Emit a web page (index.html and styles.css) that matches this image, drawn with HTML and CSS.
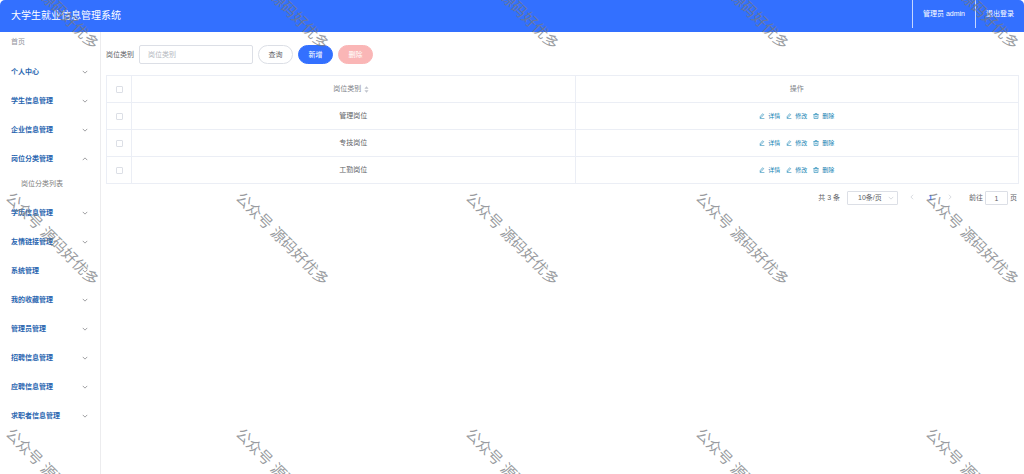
FILE: index.html
```html
<!DOCTYPE html>
<html lang="zh-CN">
<head>
  <meta charset="UTF-8">
  <meta name="viewport" content="width=device-width, initial-scale=1.0">
  <title>大学生就业信息管理系统</title>
  <link rel="stylesheet" href="styles.css">
</head>
<body>

<!-- 图标 -->
<svg class="icon-defs" aria-hidden="true">
  <symbol id="icon-down" viewBox="0 0 8 8"><path d="M1 2.5 4 5.5 7 2.5"/></symbol>
  <symbol id="icon-up" viewBox="0 0 8 8"><path d="M1 5.5 4 2.5 7 5.5"/></symbol>
  <symbol id="icon-left" viewBox="0 0 8 8"><path d="M5.5 1 2.5 4 5.5 7"/></symbol>
  <symbol id="icon-right" viewBox="0 0 8 8"><path d="M2.5 1 5.5 4 2.5 7"/></symbol>
  <symbol id="icon-edit" viewBox="0 0 8 8"><path d="M1.6 4.8 4.8 1 6.2 2.2 3 5.9 1.4 6.3ZM1 7.5H7.2"/></symbol>
  <symbol id="icon-delete" viewBox="0 0 8 8"><path d="M.5 2H7.5M1.4 2V7.4H6.6V2M2.8 2V.7H5.2V2M3.2 3.6V5.8M4.8 3.6V5.8"/></symbol>
</svg>

<header class="header">
  <h1 class="header-title">大学生就业信息管理系统</h1>
  <div class="header-right">
    <span class="header-item">管理员 admin</span>
    <a class="header-item" href="#">退出登录</a>
  </div>
</header>

<div class="container">
  <!-- 侧边菜单 -->
  <nav class="sidebar">
    <a class="menu-home" href="#">首页</a>
    <button class="menu-item" type="button">个人中心<svg class="icon"><use href="#icon-down"/></svg></button>
    <button class="menu-item" type="button">学生信息管理<svg class="icon"><use href="#icon-down"/></svg></button>
    <button class="menu-item" type="button">企业信息管理<svg class="icon"><use href="#icon-down"/></svg></button>
    <button class="menu-item" type="button" aria-expanded="true">岗位分类管理<svg class="icon"><use href="#icon-up"/></svg></button>
    <a class="menu-sub" href="#">岗位分类列表</a>
    <button class="menu-item" type="button">学历信息管理<svg class="icon"><use href="#icon-down"/></svg></button>
    <button class="menu-item" type="button">友情链接管理<svg class="icon"><use href="#icon-down"/></svg></button>
    <button class="menu-item" type="button">系统管理<svg class="icon"><use href="#icon-down"/></svg></button>
    <button class="menu-item" type="button">我的收藏管理<svg class="icon"><use href="#icon-down"/></svg></button>
    <button class="menu-item" type="button">管理员管理<svg class="icon"><use href="#icon-down"/></svg></button>
    <button class="menu-item" type="button">招聘信息管理<svg class="icon"><use href="#icon-down"/></svg></button>
    <button class="menu-item" type="button">应聘信息管理<svg class="icon"><use href="#icon-down"/></svg></button>
    <button class="menu-item" type="button">求职者信息管理<svg class="icon"><use href="#icon-down"/></svg></button>
  </nav>

  <main class="main">
    <!-- 查询条件 -->
    <form class="search-form">
      <label for="category">岗位类别</label>
      <input class="search-input" type="text" id="category" placeholder="岗位类别">
      <button class="btn" type="button">查询</button>
      <button class="btn btn-primary" type="button">新增</button>
      <button class="btn btn-danger" type="button" disabled>删除</button>
    </form>

    <!-- 岗位分类列表 -->
    <table class="table">
      <thead>
        <tr>
          <th class="col-check"><input class="checkbox" type="checkbox" aria-label="全选"></th>
          <th>岗位类别<svg class="sort" viewBox="0 0 6 8"><path d="M3 0 5.5 3H.5ZM3 8 .5 5H5.5Z"/></svg></th>
          <th>操作</th>
        </tr>
      </thead>
      <tbody>
        <tr>
          <td><input class="checkbox" type="checkbox" aria-label="管理岗位"></td>
          <td>管理岗位</td>
          <td>
            <div class="actions">
              <button class="action" type="button"><svg class="icon"><use href="#icon-edit"/></svg>详情</button>
              <button class="action" type="button"><svg class="icon"><use href="#icon-edit"/></svg>修改</button>
              <button class="action" type="button"><svg class="icon"><use href="#icon-delete"/></svg>删除</button>
            </div>
          </td>
        </tr>
        <tr>
          <td><input class="checkbox" type="checkbox" aria-label="专技岗位"></td>
          <td>专技岗位</td>
          <td>
            <div class="actions">
              <button class="action" type="button"><svg class="icon"><use href="#icon-edit"/></svg>详情</button>
              <button class="action" type="button"><svg class="icon"><use href="#icon-edit"/></svg>修改</button>
              <button class="action" type="button"><svg class="icon"><use href="#icon-delete"/></svg>删除</button>
            </div>
          </td>
        </tr>
        <tr>
          <td><input class="checkbox" type="checkbox" aria-label="工勤岗位"></td>
          <td>工勤岗位</td>
          <td>
            <div class="actions">
              <button class="action" type="button"><svg class="icon"><use href="#icon-edit"/></svg>详情</button>
              <button class="action" type="button"><svg class="icon"><use href="#icon-edit"/></svg>修改</button>
              <button class="action" type="button"><svg class="icon"><use href="#icon-delete"/></svg>删除</button>
            </div>
          </td>
        </tr>
      </tbody>
    </table>

    <!-- 分页 -->
    <div class="pagination">
      <span>共 3 条</span>
      <div class="page-size">
        <select aria-label="每页条数">
          <option>10条/页</option>
          <option>20条/页</option>
          <option>50条/页</option>
        </select>
        <svg class="icon"><use href="#icon-down"/></svg>
      </div>
      <div class="pager">
        <button type="button" aria-label="上一页" disabled><svg class="icon"><use href="#icon-left"/></svg></button>
        <button class="current" type="button">1</button>
        <button type="button" aria-label="下一页" disabled><svg class="icon"><use href="#icon-right"/></svg></button>
      </div>
      <div class="page-jump">
        <label for="page">前往</label>
        <input type="text" id="page" value="1">
        <span>页</span>
      </div>
    </div>
  </main>
</div>

<!-- 水印 -->
<div class="watermark">
  <div class="watermark-grid">
    <span>公众号 源码好优多</span><span>公众号 源码好优多</span><span>公众号 源码好优多</span><span>公众号 源码好优多</span><span>公众号 源码好优多</span>
    <span>公众号 源码好优多</span><span>公众号 源码好优多</span><span>公众号 源码好优多</span><span>公众号 源码好优多</span><span>公众号 源码好优多</span>
    <span>公众号 源码好优多</span><span>公众号 源码好优多</span><span>公众号 源码好优多</span><span>公众号 源码好优多</span><span>公众号 源码好优多</span>
  </div>
</div>

</body>
</html>
```
FILE: styles.css
```css
/* 基础样式 */
* {
  box-sizing: border-box;
}

body {
  margin: 0;
  min-height: 100vh;
  display: flex;
  flex-direction: column;
  background: #fff;
  color: #606266;
  font-family: "Liberation Sans", "Noto Sans CJK SC", sans-serif;
  font-size: 7px;
  line-height: 10px;
}

button, input, select {
  margin: 0;
  padding: 0;
  font: inherit;
  color: inherit;
  background: none;
  border: none;
}

button {
  cursor: pointer;
}

a {
  color: inherit;
  text-decoration: none;
}

.icon-defs {
  display: none;
}

.icon {
  width: 6px;
  height: 6px;
  flex: none;
  fill: none;
  stroke: currentColor;
  stroke-width: 0.8;
}

/* 顶部 */
.header {
  height: 32px;
  display: flex;
  justify-content: space-between;
  padding-left: 11px;
  background: #3370ff;
  color: #fff;
  border-radius: 5px 5px 0 0;
}

.header-title {
  margin: 0;
  font-size: 10px;
  font-weight: normal;
  line-height: 31px;
}

.header-right {
  display: flex;
  height: 28px;
}

.header-item {
  padding: 0 10px;
  border-left: 1px solid #c5d7ff;
  line-height: 28px;
}

.container {
  flex: 1;
  display: flex;
}

/* 侧边菜单 */
.sidebar {
  width: 101px;
  flex: none;
  display: flex;
  flex-direction: column;
  border-right: 1px solid #ececee;
}

.menu-home {
  margin-bottom: 5px;
  padding-left: 11px;
  line-height: 20px;
  color: #909399;
}

.menu-item {
  height: 29px;
  display: flex;
  align-items: center;
  justify-content: space-between;
  padding: 0 12px 0 11px;
  color: #2a66b0;
  font-weight: bold;
}

.menu-item .icon {
  color: #606266;
}

.menu-sub {
  padding: 0 0 3px 21px;
  line-height: 22px;
  color: #808080;
}

/* 内容区 */
.main {
  flex: 1;
  min-width: 0;
  padding: 13px 5px 0 5px;
}

.search-form {
  display: flex;
  align-items: center;
  gap: 5px;
  margin-bottom: 11px;
}

.search-input {
  width: 114px;
  height: 19px;
  padding: 0 8px;
  border: 1px solid #dcdfe6;
  border-radius: 2px;
}

.search-input::placeholder {
  color: #b4b8c0;
}

.btn {
  width: 35px;
  height: 19px;
  border: 1px solid #dcdfe6;
  border-radius: 10px;
}

.btn-primary {
  background: #3370ff;
  border-color: #3370ff;
  color: #fff;
}

.btn-danger {
  background: #fab6b6;
  border-color: #fab6b6;
  color: #fff;
}

/* 表格 */
.table {
  width: 100%;
  table-layout: fixed;
  border-collapse: collapse;
}

.table th, .table td {
  height: 27px;
  padding: 0;
  border: 1px solid #ebeef5;
  text-align: center;
  vertical-align: middle;
}

.table th {
  font-weight: normal;
  color: #808389;
}

.table .col-check {
  width: 25px;
}

.checkbox {
  display: block;
  width: 7px;
  height: 7px;
  margin: 0 auto;
  appearance: none;
  border: 1px solid #dcdfe6;
  border-radius: 1px;
}

.checkbox:checked {
  background: #3370ff;
}

.sort {
  width: 5px;
  height: 7px;
  margin: 0 4px 0 3px;
  vertical-align: middle;
  fill: #c0c4cc;
}

.actions {
  display: flex;
  justify-content: center;
  gap: 6px;
}

.action {
  display: flex;
  align-items: center;
  gap: 3px;
  font-size: 6px;
  color: #1683b4;
}

/* 分页 */
.pagination {
  display: flex;
  align-items: center;
  justify-content: flex-end;
  margin-top: 7px;
  padding-right: 2px;
}

.page-size {
  display: grid;
  align-items: center;
  margin: 0 4px 0 7px;
}

.page-size select {
  grid-area: 1 / 1;
  width: 51px;
  height: 14px;
  padding-left: 10px;
  appearance: none;
  border: 1px solid #dcdfe6;
  border-radius: 1px;
}

.page-size .icon {
  grid-area: 1 / 1;
  justify-self: end;
  margin-right: 4px;
  color: #c0c4cc;
  pointer-events: none;
}

.pager {
  display: flex;
}

.pager button {
  width: 19px;
  height: 14px;
  color: #c0c4cc;
}

.pager .current {
  color: #3370ff;
  font-weight: bold;
}

.page-jump {
  display: flex;
  align-items: center;
  gap: 2px;
  margin-left: 10px;
}

.page-jump input {
  width: 23px;
  height: 14px;
  border: 1px solid #dcdfe6;
  border-radius: 1px;
  text-align: center;
}

/* 水印 */
.watermark {
  position: absolute;
  inset: 0;
  overflow: hidden;
  pointer-events: none;
}

.watermark-grid {
  position: absolute;
  top: -115px;
  left: -63px;
  display: grid;
  grid-template-columns: repeat(5, 230px);
  grid-auto-rows: 236px;
  place-items: center;
  font-size: 15px;
  line-height: 20px;
  white-space: nowrap;
  color: rgba(118, 122, 128, 0.75);
}

.watermark-grid span {
  transform: rotate(45deg);
}
```
